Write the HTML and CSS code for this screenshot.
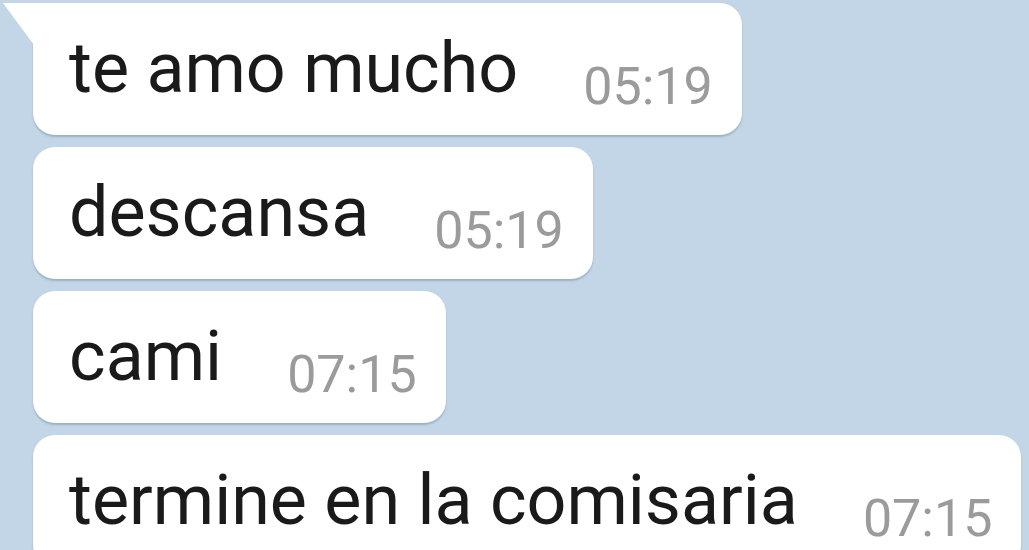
FILE: index.html
```html
<!DOCTYPE html>
<html lang="es">
<head>
    <meta charset="UTF-8">
    <meta name="viewport" content="width=device-width, initial-scale=1.0">
    <title>Chat</title>
    <link rel="stylesheet" href="styles.css">
</head>
<body>
    <div class="chat">
        <div class="bubble first">
            <span class="text">te amo mucho</span>
            <span class="time">05:19</span>
        </div>
        <div class="bubble">
            <span class="text">descansa</span>
            <span class="time">05:19</span>
        </div>
        <div class="bubble">
            <span class="text">cami</span>
            <span class="time">07:15</span>
        </div>
        <div class="bubble">
            <span class="text">termine en la comisaria</span>
            <span class="time">07:15</span>
        </div>
    </div>
</body>
</html>
```

FILE: styles.css
```css
html, body {
    margin: 0;
    height: 100%;
    overflow: hidden;
}

body {
    font-family: Roboto, "Noto Sans", Arial, sans-serif;
    background-color: #c3d6e7;
}

.chat {
    display: flex;
    flex-direction: column;
    align-items: flex-start;
    gap: 12px;
    padding: 3px 0 0 33px;
}

.bubble {
    position: relative;
    display: flex;
    align-items: flex-end;
    background: #fff;
    border-radius: 22px;
    padding: 25px 29px 22px 36px;
    box-shadow: 0 2px 2px rgba(90, 110, 130, 0.35);
}

.bubble.first {
    border-top-left-radius: 0;
}

/* tail of the first message */
.bubble.first::before {
    content: "";
    position: absolute;
    left: -30px;
    top: 0;
    width: 31px;
    height: 42px;
    background: #fff;
    clip-path: polygon(0 0, 100% 0, 100% 100%);
}

.text {
    font-size: 70px;
    line-height: 80px;
    color: #1a1a1a;
    margin-bottom: 5px;
    white-space: nowrap;
}

.time {
    font-size: 52px;
    line-height: 52px;
    color: #9b9b9b;
    margin-left: 65px;
    white-space: nowrap;
}
```
